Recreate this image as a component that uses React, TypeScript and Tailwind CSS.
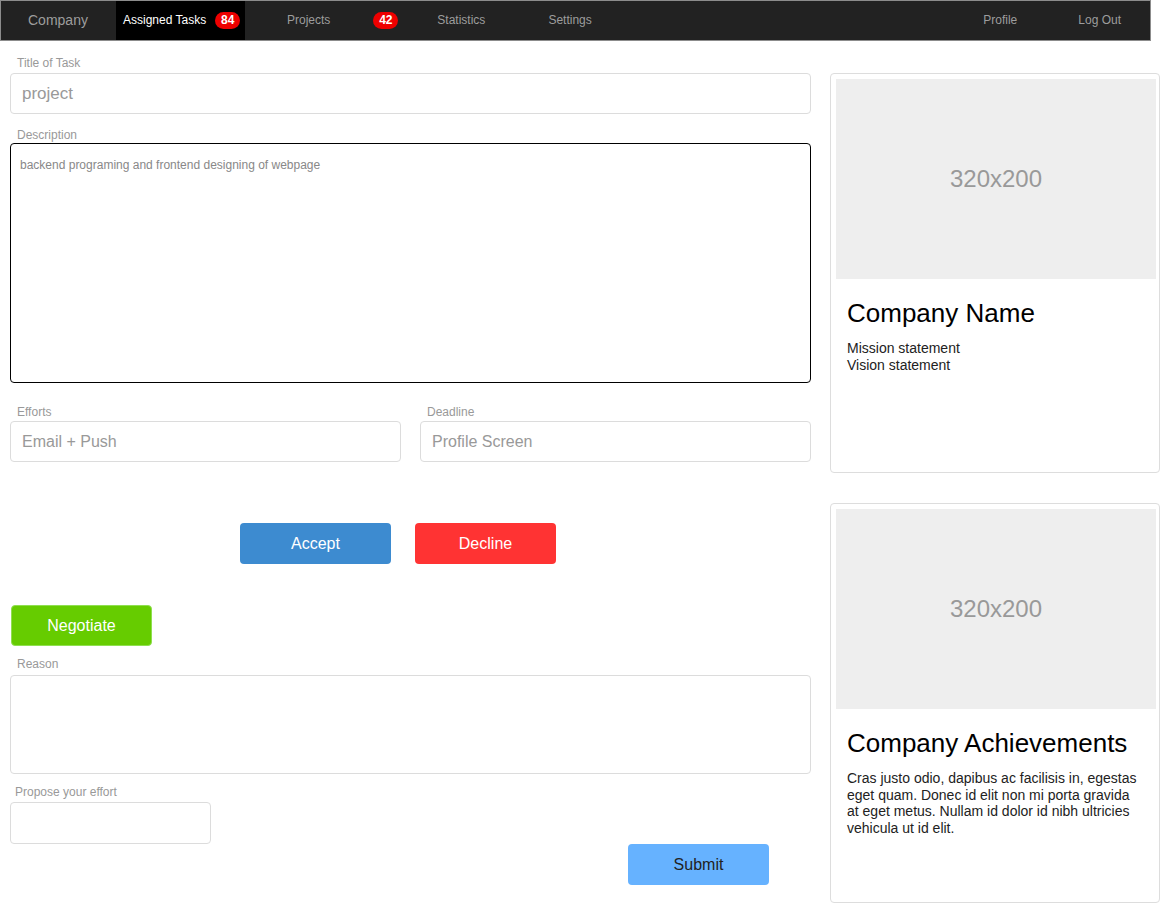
import React from "react"

const font = { fontFamily: '"Liberation Sans", Arial, sans-serif' }

function Label({ children, className = "" }: { children: React.ReactNode; className?: string }) {
  return <div className={`text-[12px] leading-[14px] text-[#999] ${className}`}>{children}</div>
}

function Box({ children, className = "" }: { children?: React.ReactNode; className?: string }) {
  return (
    <div className={`flex items-center rounded-[4px] border border-[#dcdcdc] bg-white px-[11px] text-[16px] text-[#999] ${className}`}>
      {children}
    </div>
  )
}

function Badge({ n }: { n: string }) {
  return (
    <span className="inline-flex h-[17px] w-[25px] items-center justify-center rounded-full bg-[#e00] text-[12px] font-bold text-white">
      {n}
    </span>
  )
}

function Card({ title, children }: { title: string; children: React.ReactNode }) {
  return (
    <div className="h-[400px] w-[330px] rounded-[4px] border border-[#ddd] bg-white p-[5px]">
      <div className="flex h-[200px] w-[320px] items-center justify-center bg-[#eee] text-[24px] text-[#999]">
        320x200
      </div>
      <div className="px-[11px] pt-[18px]">
        <h3 className="text-[26px] leading-[32px] text-black">{title}</h3>
        <div className="mt-[11px] text-[14px] leading-[16.7px] text-[#222]">{children}</div>
      </div>
    </div>
  )
}

export default function App() {
  return (
    <div className="min-h-screen bg-white" style={font}>
      <nav className="flex h-[41px] w-[1151px] items-stretch border border-[#8c8c8c] bg-[#222] text-[12px] leading-[14px] text-[#9d9d9d]">
        <div className="flex w-[115px] items-center pl-[27px] pb-[1px] text-[14px]">Company</div>
        <div className="flex w-[129px] items-center gap-[9px] bg-black pl-[7px] pb-[1px] text-white">
          <span>Assigned Tasks</span>
          <Badge n="84" />
        </div>
        <div className="ml-[42px] flex items-center pb-[1px]">Projects</div>
        <div className="ml-[43px] flex items-center pb-[1px]">
          <Badge n="42" />
        </div>
        <div className="ml-[39px] flex items-center pb-[1px]">Statistics</div>
        <div className="ml-[63px] flex items-center pb-[1px]">Settings</div>
        <div className="ml-auto flex items-center pb-[1px]">Profile</div>
        <div className="ml-[61px] mr-[29px] flex items-center pb-[1px]">Log Out</div>
      </nav>

      <div className="flex gap-[19px] pl-[10px]">
        <div className="w-[801px]">
          <Label className="mt-[15px] pl-[7px]">Title of Task</Label>
          <Box className="mt-[3px] h-[41px] text-[17px]">project</Box>

          <Label className="mt-[14px] pl-[7px]">Description</Label>
          <div className="mt-[1px] h-[240px] rounded-[4px] border border-black px-[9px] pt-[14px] text-[12px] leading-[14px] text-[#888]">
            backend programing and frontend designing of webpage
          </div>

          <div className="mt-[22px] flex gap-[19px]">
            <div className="flex-1">
              <Label className="pl-[7px]">Efforts</Label>
              <Box className="mt-[2px] h-[41px]">Email + Push</Box>
            </div>
            <div className="flex-1">
              <Label className="pl-[7px]">Deadline</Label>
              <Box className="mt-[2px] h-[41px]">Profile Screen</Box>
            </div>
          </div>

          <div className="mt-[61px] flex gap-[24px] pl-[230px]">
            <button className="h-[41px] w-[151px] rounded-[4px] bg-[#3d8bd0] text-[16px] text-white">Accept</button>
            <button className="h-[41px] w-[141px] rounded-[4px] bg-[#ff3333] text-[16px] text-white">Decline</button>
          </div>

          <button className="ml-[1px] mt-[41px] h-[41px] w-[141px] rounded-[4px] border border-[#8fdf4f] bg-[#66cc00] text-[16px] text-white">
            Negotiate
          </button>

          <Label className="mt-[11px] pl-[7px]">Reason</Label>
          <Box className="mt-[4px] h-[99px]" />

          <Label className="mt-[11px] pl-[5px]">Propose your effort</Label>
          <div className="mt-[3px] flex items-start">
            <Box className="h-[42px] w-[201px]" />
            <button className="ml-[417px] mt-[42px] h-[41px] w-[141px] rounded-[4px] bg-[#66b2ff] text-[16px] text-[#222]">
              Submit
            </button>
          </div>
        </div>

        <div className="flex flex-col gap-[30px] pt-[32px]">
          <Card title="Company Name">
            <p>Mission statement</p>
            <p>Vision statement</p>
          </Card>
          <Card title="Company Achievements">
            <p>
              Cras justo odio, dapibus ac facilisis in, egestas eget quam. Donec id elit non mi porta gravida at eget
              metus. Nullam id dolor id nibh ultricies vehicula ut id elit.
            </p>
          </Card>
        </div>
      </div>
    </div>
  )
}
